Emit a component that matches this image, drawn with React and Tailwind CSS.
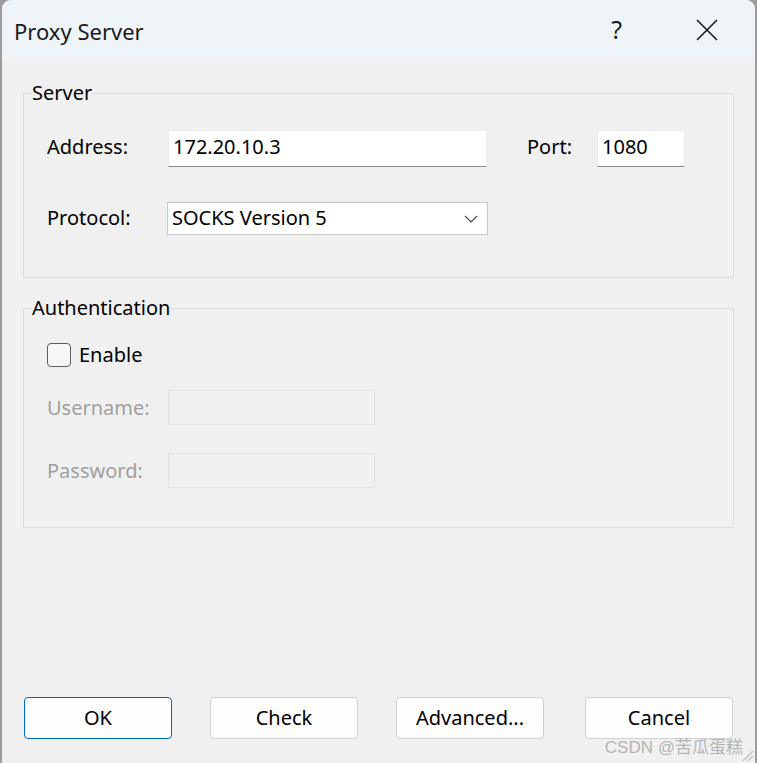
import React from "react";

const F = { fontFamily: '"Noto Sans", "Open Sans", sans-serif' };

function Btn({ children, primary }) {
  return (
    <button
      className={
        primary
          ? "w-[148px] h-[42px] bg-[#fdfdfd] border border-[#0067c0] rounded-[4px] text-[20px] text-black flex items-center justify-center"
          : "w-[148px] h-[42px] bg-[#fdfdfd] border border-[#d0d0d0] rounded-[4px] text-[20px] text-black flex items-center justify-center"
      }
    >
      {children}
    </button>
  );
}

export default function App() {
  return (
    <div className="w-[757px] h-[763px] bg-[#9c9c9c] overflow-hidden" style={F}>
      <div className="relative mx-[2px] h-[763px] bg-[#f0f0f0] rounded-t-[9px] overflow-hidden flex flex-col">
        {/* title bar */}
        <div className="h-[58px] bg-[#eff4f9] flex items-center pl-[12px] pt-[3px] shrink-0">
          <div className="text-[22px] text-[#1a1a1a] leading-none">Proxy Server</div>
          <div className="flex-1" />
          <div className="text-[25px] text-[#1a1a1a] leading-none mr-[74px] -mt-[3px]">?</div>
          <svg width="22" height="22" viewBox="0 0 22 22" className="mr-[37px] -mt-[2px]">
            <path d="M1 1 L21 21 M21 1 L1 21" stroke="#1a1a1a" strokeWidth="1.6" />
          </svg>
        </div>

        <div className="px-[21px] flex flex-col flex-1">
          {/* Server group */}
          <fieldset className="mt-[21px] border border-[#dcdcdc] px-[23px] pb-[42px]">
            <legend className="-ml-[15px] text-[20px] leading-[28px] text-black">Server</legend>
            <div className="mt-[23px] h-[37px] flex items-center">
              <div className="w-[121px] text-[20px] text-black pb-[4px]">Address:</div>
              <div className="w-[319px] h-[37px] bg-white border border-[#ececec] border-b-[#8a8a8a] flex items-center pl-[4px] pb-[4px] text-[20px] text-black">
                172.20.10.3
              </div>
              <div className="ml-[40px] w-[70px] text-[20px] text-black pb-[4px]">Port:</div>
              <div className="w-[88px] h-[37px] bg-white border border-[#ececec] border-b-[#8a8a8a] flex items-center pl-[4px] pb-[4px] text-[20px] text-black">
                1080
              </div>
            </div>
            <div className="mt-[35px] h-[33px] flex items-center">
              <div className="w-[120px] text-[20px] text-black pb-[1px]">Protocol:</div>
              <div className="w-[321px] h-[33px] bg-white border border-[#c8c8c8] flex items-center pl-[4px] pr-[9px] text-[20px] text-black">
                <span className="flex-1 pb-[1px]">SOCKS Version 5</span>
                <svg width="14" height="8" viewBox="0 0 14 8">
                  <path d="M1 1 L7 7 L13 1" fill="none" stroke="#444" strokeWidth="1.1" />
                </svg>
              </div>
            </div>
          </fieldset>

          {/* Authentication group */}
          <fieldset className="mt-[16px] border border-[#dcdcdc] px-[23px] pb-[39px]">
            <legend className="-ml-[15px] text-[20px] leading-[28px] text-black">Authentication</legend>
            <div className="mt-[21px] h-[24px] flex items-center">
              <div className="w-[24px] h-[24px] rounded-[4px] border border-[#5d5d5d] bg-[#f6f6f6]" />
              <div className="ml-[8px] text-[20px] text-black">Enable</div>
            </div>
            <div className="mt-[23px] h-[35px] flex items-center">
              <div className="w-[121px] text-[20px] text-[#a0a0a0]">Username:</div>
              <div className="w-[207px] h-[35px] border border-[#e2e2e2] bg-[#f0f0f0]" />
            </div>
            <div className="mt-[28px] h-[35px] flex items-center">
              <div className="w-[121px] text-[20px] text-[#a0a0a0]">Password:</div>
              <div className="w-[207px] h-[35px] border border-[#e2e2e2] bg-[#f0f0f0]" />
            </div>
          </fieldset>

          <div className="flex-1" />

          <div className="flex pl-[1px] pb-[24px]">
            <Btn primary>OK</Btn>
            <div className="w-[38px]" />
            <Btn>Check</Btn>
            <div className="w-[38px]" />
            <Btn>Advanced...</Btn>
            <div className="w-[41px]" />
            <Btn>Cancel</Btn>
          </div>
        </div>

        {/* watermark */}
        <div
          className="absolute right-[12px] bottom-[7px] text-[17px] text-[#b4b4b4] leading-none"
          style={{ fontFamily: '"Liberation Sans", "Noto Sans CJK SC", sans-serif' }}
        >
          CSDN @苦瓜蛋糕
        </div>
        <svg width="14" height="14" viewBox="0 0 14 14" className="absolute right-[1px] bottom-[1px]">
          <path d="M13 3 L3 13 M13 8 L8 13" stroke="#c8c8c8" strokeWidth="1.5" />
        </svg>
      </div>
    </div>
  );
}
